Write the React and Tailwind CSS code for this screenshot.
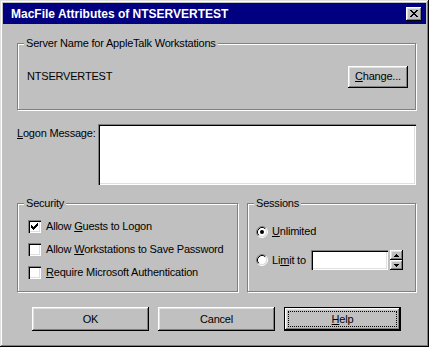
import React from 'react';

const raised = "bg-[#c0c0c0] shadow-[inset_-1px_-1px_#000,inset_1px_1px_#fff,inset_-2px_-2px_#808080,inset_2px_2px_#dfdfdf]";
const sunken = "bg-white shadow-[inset_1px_1px_#808080,inset_2px_2px_#000,inset_-1px_-1px_#fff,inset_-2px_-2px_#dfdfdf]";

const Group = ({ label, className, children }) => (
    <div className={`relative border border-[#808080] shadow-[inset_1px_1px_#fff,1px_1px_#fff] ${className}`}>
        <span className="absolute left-[6px] top-[-8px] bg-[#c0c0c0] px-[2px] leading-[14px] whitespace-nowrap">{label}</span>
        {children}
    </div>
);

const CloseGlyph = () => (
    <svg width="8" height="7" viewBox="0 0 8 7" shapeRendering="crispEdges">
        <path d="M0 0h2v1H0zM6 0h2v1H6zM1 1h2v1H1zM5 1h2v1H5zM2 2h4v1H2zM3 3h2v1H3zM2 4h4v1H2zM1 5h2v1H1zM5 5h2v1H5zM0 6h2v1H0zM6 6h2v1H6z" fill="#000" />
    </svg>
);

const Checkbox = ({ checked }) => (
    <div className={`w-[13px] h-[13px] shrink-0 flex items-center justify-center ${sunken}`}>
        {checked && (
            <svg width="7" height="7" viewBox="0 0 7 7" shapeRendering="crispEdges">
                <path d="M6 0h1v3H6zM5 1h1v3H5zM4 2h1v3H4zM0 2h1v3H0zM1 3h1v3H1zM2 4h1v3H2zM3 3h1v3H3z" fill="#000" />
            </svg>
        )}
    </div>
);

const Radio = ({ checked }) => (
    <svg width="12" height="12" viewBox="0 0 12 12" className="shrink-0">
        <circle cx="6" cy="6" r="4.5" fill="#fff" />
        <path d="M2.11 9.89A5.5 5.5 0 0 1 9.89 2.11" stroke="#808080" fill="none" />
        <path d="M9.89 2.11A5.5 5.5 0 0 1 2.11 9.89" stroke="#fff" fill="none" />
        <path d="M2.82 9.18A4.5 4.5 0 0 1 9.18 2.82" stroke="#000" fill="none" />
        <path d="M9.18 2.82A4.5 4.5 0 0 1 2.82 9.18" stroke="#dfdfdf" fill="none" />
        {checked && <circle cx="6" cy="6" r="2" fill="#000" />}
    </svg>
);

const SpinButton = ({ up }) => (
    <div className={`w-[13px] h-[10px] flex items-center justify-center ${raised}`}>
        <svg width="5" height="3" viewBox="0 0 5 3" shapeRendering="crispEdges">
            <path d={up ? "M2 0h1v1H2zM1 1h3v1H1zM0 2h5v1H0z" : "M0 0h5v1H0zM1 1h3v1H1zM2 2h1v1H2z"} fill="#000" />
        </svg>
    </div>
);

const PushButton = ({ children, isDefault }) => (
    isDefault ? (
        <div className="w-[117px] h-[24px] border border-black">
            <div className={`w-full h-full p-[3px] ${raised}`}>
                <div className="w-full h-full border border-dotted border-black flex items-center justify-center">
                    {children}
                </div>
            </div>
        </div>
    ) : (
        <div className={`w-[117px] h-[24px] flex items-center justify-center ${raised}`}>{children}</div>
    )
);

export default function App() {
    return (
        <div className="w-[432px] h-[352px] bg-white font-['Liberation_Sans',Arial,sans-serif] text-[11px] tracking-[-0.2px] text-black select-none whitespace-nowrap">
            <div className="w-[429px] h-[347px] bg-[#c0c0c0] p-[3px] flex flex-col shadow-[inset_-1px_-1px_#000,inset_1px_1px_#dfdfdf,inset_-2px_-2px_#808080,inset_2px_2px_#fff]">
                {/* title bar */}
                <div className="h-[21px] bg-[#000080] flex items-center pl-[8px] pr-[4px] text-white font-bold text-[12px] tracking-normal">
                    <span className="flex-1">MacFile Attributes of NTSERVERTEST</span>
                    <div className={`w-[16px] h-[14px] flex items-center justify-center ${raised}`}>
                        <CloseGlyph />
                    </div>
                </div>

                <div className="flex flex-col pl-[14px] pr-[10px]">
                    <Group label="Server Name for AppleTalk Workstations" className="mt-[19px] h-[67px] flex items-center justify-between pl-[9px] pr-[7px]">
                        <span>NTSERVERTEST</span>
                        <div className={`w-[60px] h-[22px] flex items-center justify-center ${raised}`}>
                            <span><u>C</u>hange...</span>
                        </div>
                    </Group>

                    <div className="mt-[14px] flex">
                        <div className="w-[81px] pt-[2px] leading-[14px]"><u>L</u>ogon Message:</div>
                        <div className={`flex-1 h-[61px] ${sunken}`} />
                    </div>

                    <div className="mt-[18px] flex gap-[9px]">
                        <Group label="Security" className="w-[221px] h-[89px] pl-[10px] pt-[11px] flex flex-col">
                            <div className="h-[23px] flex items-center gap-[5px]">
                                <Checkbox checked />
                                <span>Allow <u>G</u>uests to Logon</span>
                            </div>
                            <div className="h-[23px] flex items-center gap-[5px]">
                                <Checkbox />
                                <span>Allow <u>W</u>orkstations to Save Password</span>
                            </div>
                            <div className="h-[23px] flex items-center gap-[5px]">
                                <Checkbox />
                                <span><u>R</u>equire Microsoft Authentication</span>
                            </div>
                        </Group>

                        <Group label="Sessions" className="flex-1 h-[89px] pl-[8px] pt-[19px] flex flex-col">
                            <div className="h-[17px] flex items-center gap-[4px]">
                                <Radio checked />
                                <span><u>U</u>nlimited</span>
                            </div>
                            <div className="mt-[9px] h-[22px] flex items-center">
                                <Radio />
                                <span className="ml-[4px] w-[39px]">Li<u>m</u>it to</span>
                                <div className={`w-[77px] h-[20px] ${sunken}`} />
                                <div className="ml-[2px] flex flex-col">
                                    <SpinButton up />
                                    <SpinButton />
                                </div>
                            </div>
                        </Group>
                    </div>

                    <div className="mt-[15px] ml-[15px] flex gap-[9px]">
                        <PushButton>OK</PushButton>
                        <PushButton>Cancel</PushButton>
                        <PushButton isDefault><span><u>H</u>elp</span></PushButton>
                    </div>
                </div>
            </div>
        </div>
    );
}
